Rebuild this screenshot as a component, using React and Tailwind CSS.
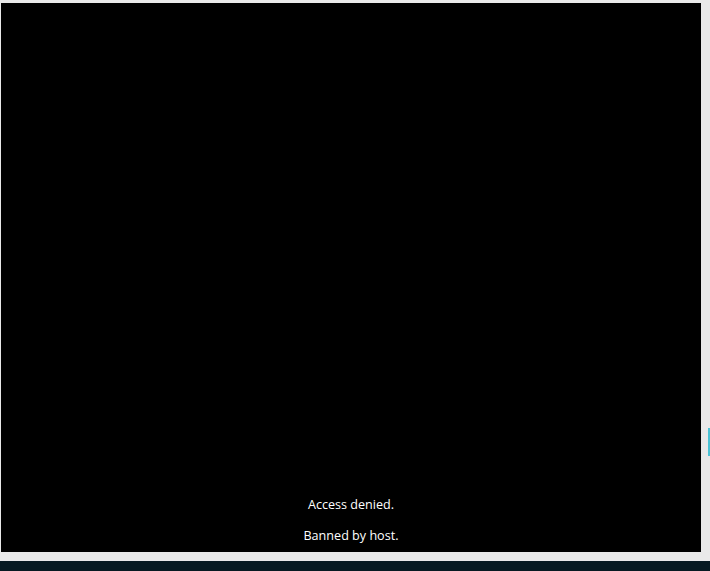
export default function App() {
  return (
    <div className="flex h-[571px] w-[710px] flex-col overflow-hidden bg-[#e9e9e9]">
      <div className="flex flex-1 flex-col pt-[3px] pl-[1px] pr-[9px]">
        <main className="relative flex h-[549px] flex-col items-center justify-end bg-black pb-[6px] font-['Open_Sans',sans-serif] text-[12.6px] leading-[20px] text-white">
          <p>Access denied.</p>
          <p className="mt-[11px]">Banned by host.</p>
        </main>
        <div className="h-[9px]" />
      </div>
      <div className="relative h-[10px] bg-[#071a22]" />
      <div className="absolute left-[708px] top-[428px] h-[28px] w-[2px] bg-[#4cc3d6]" />
    </div>
  );
}
